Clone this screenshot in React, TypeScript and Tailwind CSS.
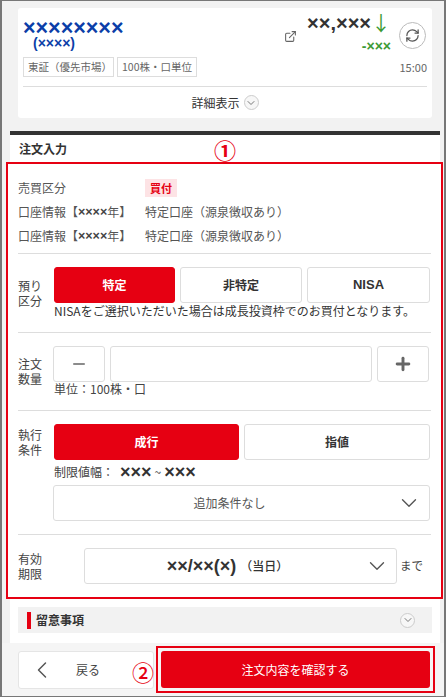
import React from "react";
import { ChevronDown, ChevronLeft, ExternalLink, RefreshCw, Plus, Minus } from "lucide-react";

const font = "font-['Noto_Sans_CJK_JP','Noto_Sans',sans-serif]";
const latin = "font-['Liberation_Sans',sans-serif] font-bold";

function Row({ label, value }: { label: React.ReactNode; value: React.ReactNode }) {
  return (
    <div className="flex items-center h-6 text-[12px] text-[#555]">
      <div className="w-[127px] flex items-center whitespace-nowrap">{label}</div>
      <div>{value}</div>
    </div>
  );
}

function Btn({ children, active, className }: { children?: React.ReactNode; active?: boolean; className?: string }) {
  return (
    <div
      className={
        "h-9 flex items-center justify-center rounded-[3px] text-[12px] font-bold border " +
        (active ? "bg-[#e60012] border-[#e60012] text-white " : "bg-white border-[#ddd] text-[#333] ") +
        (className ?? "")
      }
    >
      {children}
    </div>
  );
}

function Section({ lines, labelPad, children, last }: { lines: string[]; labelPad: string; children: React.ReactNode; last?: boolean }) {
  return (
    <div className={"flex mx-[10px] " + (last ? "" : "border-b border-[#ddd]")}>
      <div className={"w-[36px] shrink-0 text-[12px] leading-[15px] text-[#444] " + labelPad}>
        {lines.map((l) => (
          <div key={l}>{l}</div>
        ))}
      </div>
      <div className="flex-1 min-w-0">{children}</div>
    </div>
  );
}

function SmallCircle() {
  return (
    <span className="w-[15px] h-[15px] rounded-full border border-[#ccc] bg-[#f7f7f7] flex items-center justify-center">
      <ChevronDown size={12} className="text-[#777]" />
    </span>
  );
}

const account = (
  <>
    口座情報【<span className={latin + " text-[12.5px] leading-[16px] text-[#444]"}>××××</span>年】
  </>
);

export default function App() {
  return (
    <div className={font + " w-[446px] h-[697px] bg-[#f2f2f2] border-x-2 border-y border-[#777] overflow-hidden flex flex-col box-border"}>
      <div className="pl-[16px] pr-[12px] pt-[7px] pb-[13px]">
        <div className="bg-white rounded-[3px] h-[110px] px-[5px] flex flex-col">
          <div className="flex h-[49px]">
            <div className="w-[261px] pt-[12px]">
              <div className={latin + " text-[#0b3ea8] text-[21.5px] leading-[16px]"}>××××××××</div>
              <div className={latin + " text-[#0b3ea8] text-[14px] leading-[14px] pl-[10px]"}>(××××)</div>
            </div>
            <div className="pt-[22px] w-[23px]">
              <ExternalLink size={13} className="text-[#666]" />
            </div>
            <div className="w-[84px] flex flex-col items-end pt-[5px]">
              <div className="flex items-center text-[#333] h-[20px]">
                <span className={latin + " text-[20px] leading-[20px]"}>××,×××</span>
                <span className="text-[#3c9a35] text-[20px] leading-[20px] font-normal">↓</span>
              </div>
              <div className={latin + " text-[#3c9a35] text-[14px] leading-[14px] mt-[6px]"}>-×××</div>
            </div>
            <div className="ml-[8px] pt-[14px]">
              <div className="w-[27px] h-[27px] rounded-full border border-[#bbb] flex items-center justify-center">
                <RefreshCw size={15} className="text-[#555]" />
              </div>
            </div>
          </div>
          <div className="flex items-center gap-[3px] h-[20px] text-[10.5px] text-[#666]">
            <div className="border border-[#ddd] h-5 w-[91px] pl-[4px] flex items-center whitespace-nowrap">東証（優先市場）</div>
            <div className="border border-[#ddd] h-5 w-[80px] justify-center flex items-center whitespace-nowrap">100株・口単位</div>
            <div className="ml-auto text-[11px] text-[#666]">15:00</div>
          </div>
          <div className="mt-[9px] border-t border-[#ddd] flex-1 flex items-center justify-center gap-[4px] text-[12px] text-[#333]">
            詳細表示
            <SmallCircle />
          </div>
        </div>
      </div>

      <div className="ml-[8px] mr-[4px] flex-1 bg-white border-t-4 border-[#333] flex flex-col">
        <div className="h-[27px] pl-[9px] flex items-center text-[12px] font-bold text-[#333] relative">
          注文入力
          <span className="absolute left-[204px] -top-[1px] text-[#e60012] text-[22px] leading-[30px]">①</span>
        </div>
        <div className="-ml-[4px] -mr-[3px] border-2 border-[#e60012] bg-white h-[437px] flex flex-col">
          <div className="mx-[10px] pt-[12px] pb-[5px] border-b border-[#ddd]">
            <Row label="売買区分" value={<span className="bg-[#fde3e5] text-[#e60012] font-bold px-[5px] py-[1px] text-[11px]">買付</span>} />
            <Row label={account} value="特定口座（源泉徴収あり）" />
            <Row label={account} value="特定口座（源泉徴収あり）" />
          </div>
          <Section lines={["預り", "区分"]} labelPad="pt-[24px]">
            <div className="pt-[13px] pb-[13px]">
              <div className="flex gap-[5px]">
                <Btn active className="w-[121px]">特定</Btn>
                <Btn className="w-[122px]">非特定</Btn>
                <Btn className="w-[123px]"><span className={latin + " text-[13px]"}>NISA</span></Btn>
              </div>
              <div className="text-[12px] leading-[16px] text-[#333] whitespace-nowrap">NISAをご選択いただいた場合は成長投資枠でのお買付となります。</div>
            </div>
          </Section>
          <Section lines={["注文", "数量"]} labelPad="pt-[23px]">
            <div className="pt-[13px] pb-[14px]">
              <div className="flex gap-[5px] -ml-[1px]">
                <Btn className="w-[52px]"><Minus size={18} className="text-[#666]" /></Btn>
                <Btn className="w-[262px]" />
                <Btn className="w-[52px]"><Plus size={20} strokeWidth={3.5} className="text-[#666]" /></Btn>
              </div>
              <div className="text-[12px] leading-[14px] text-[#444]">単位：100株・口</div>
            </div>
          </Section>
          <Section lines={["執行", "条件"]} labelPad="pt-[16px]">
            <div className="pt-[13px] pb-[13px]">
              <div className="flex gap-[5px]">
                <Btn active className="w-[185px]">成行</Btn>
                <Btn className="w-[186px]">指値</Btn>
              </div>
              <div className="h-[14px] text-[12px] leading-[14px] text-[#444] mt-[5px] flex items-center">
                制限値幅：
                <span className={latin + " text-[18px] ml-[6px] text-[#333]"}>×××</span>
                <span className="mx-[3px]">~</span>
                <span className={latin + " text-[18px] text-[#333]"}>×××</span>
              </div>
              <div className="-ml-[1px] mt-[6px] h-9 w-[377px] border border-[#ddd] rounded-[3px] flex items-center relative justify-center text-[12px] text-[#555] pr-[24px]">
                追加条件なし
                <ChevronDown size={26} strokeWidth={1.25} className="absolute right-[7px] text-[#555]" />
              </div>
            </div>
          </Section>
          <Section last lines={["有効", "期限"]} labelPad="pt-[16px]">
            <div className="pt-[13px] flex items-center pl-[30px]">
              <div className="w-[313px] h-9 border border-[#ddd] rounded-[3px] flex items-center justify-center relative text-[12px] text-[#333] pr-[26px]">
                <span className={latin + " text-[18px]"}>××/××(×)</span>
                <span className="font-medium ml-[4px] whitespace-nowrap">（当日）</span>
                <ChevronDown size={26} strokeWidth={1.25} className="absolute right-[6px] text-[#555]" />
              </div>
              <span className="ml-[3px] text-[11.5px] text-[#444] whitespace-nowrap">まで</span>
            </div>
          </Section>
        </div>
        <div className="ml-[8px] mr-[8px] mt-[8px] h-[26px] bg-[#f2f2f2] flex items-center pl-[9px] pr-[17px]">
          <span className="w-[4px] h-[17px] bg-[#e60012] mr-[5px]" />
          <span className="text-[12px] font-bold text-[#333]">留意事項</span>
          <span className="ml-auto">
            <SmallCircle />
          </span>
        </div>
      </div>

      <div className="h-[53px] bg-[#f5f5f5] pl-[16px] flex items-center shrink-0">
        <div className="w-[136px] h-[38px] bg-white rounded-[3px] border border-[#e5e5e5] flex items-center pl-[9px] text-[12px] text-[#444] relative">
          <ChevronLeft size={28} strokeWidth={1.25} className="text-[#555]" />
          <span className="ml-[20px]">戻る</span>
          <span className="absolute right-[-1px] top-[1px] text-[#e60012] text-[22px] leading-[36px] font-medium">②</span>
        </div>
        <div className="ml-[2px] w-[279px] h-[47px] border-2 border-[#e60012] flex items-center justify-center py-[3px] px-[3px]">
          <div className="w-full h-full bg-[#e60012] rounded-[3px] text-white text-[12px] flex items-center justify-center">注文内容を確認する</div>
        </div>
      </div>
    </div>
  );
}
